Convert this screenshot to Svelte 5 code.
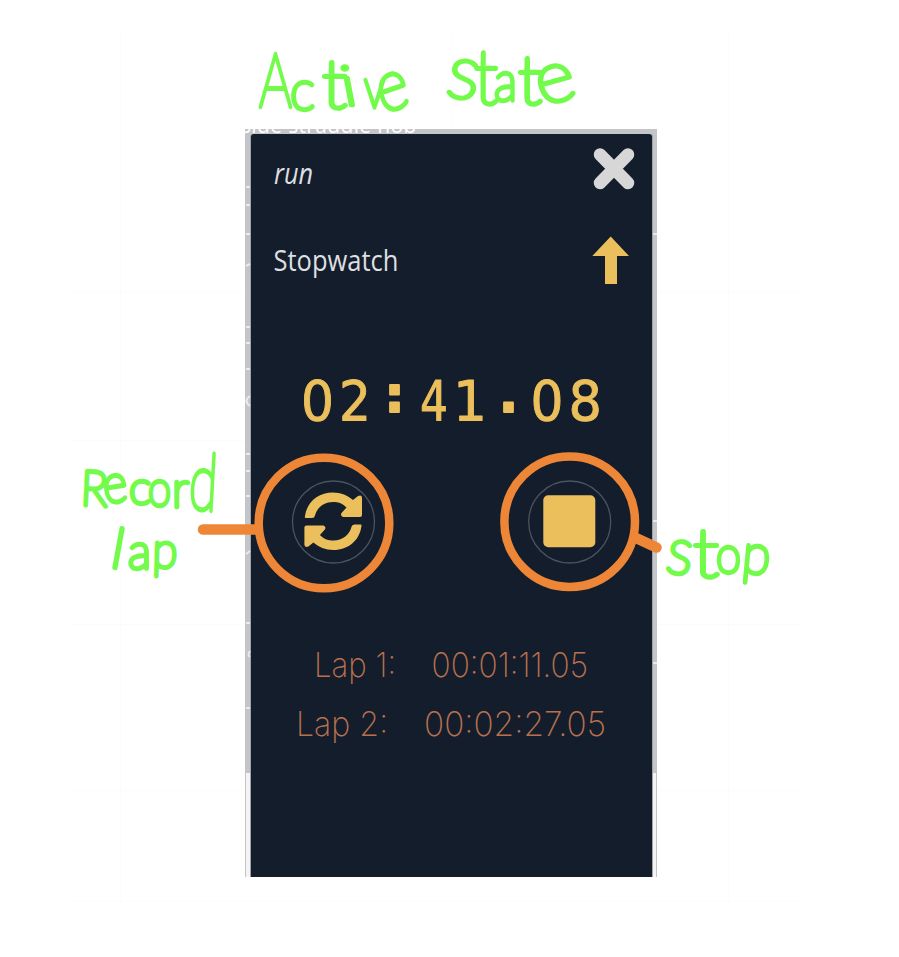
<script>
  // each glyph: character, left, baseline, drawn width, font size, rotation
  const notes = [
    [['A', 259, 107, 33, 77, 0], ['c', 290, 110, 25, 56, 0], ['t', 322, 108, 25, 68, 0], ['i', 345, 106, 14, 56, -9], ['v', 364, 108, 21, 56, 0], ['e', 382, 114, 31, 72, -16]],
    [['S', 445, 96, 31, 53, 8], ['t', 474, 104, 24, 76, 0], ['a', 494, 101, 23, 56, 0], ['t', 518, 104, 24, 68, 0], ['e', 542, 106, 39, 72, -16]],
    [['R', 80, 505, 27, 49, 3], ['e', 105, 504, 24, 54, -8], ['c', 129, 504, 22, 46, 0], ['o', 148, 506, 23, 50, 0], ['r', 172, 507, 17, 50, 0], ['d', 188, 508, 28, 80, 5]],
    [['l', 109, 567, 12, 56, 10], ['a', 128, 569, 23, 50, 0], ['p', 152, 567, 25, 50, 2]],
    [['S', 665, 572, 25, 46, 8], ['t', 693, 577, 26, 69, 0], ['o', 716, 573, 25, 52, 0], ['p', 741, 572, 28, 56, 6]]
  ];
  const clock = [['0', 301, 33], ['2', 339, 32], ['4', 420, 28], ['1', 453, 34], ['0', 530.5, 33], ['8', 568.5, 33.5]];
  const leftTicks = [186, 204, 233, 326, 342, 368, 453, 470, 495, 622, 707];
  const laps = [
    { name: 'Lap 1:', time: '00:01:11.05', x: 314, w: 82, tx: 431.5, tw: 156.5, y: 676.5 },
    { name: 'Lap 2:', time: '00:02:27.05', x: 296, w: 92, tx: 424, tw: 182, y: 736 }
  ];
  const half = 'M305.500 518Q304.500 518 305 516C307 502 318 492.500 333 492.500C341 492.500 348 495.500 353 500L358 496Q362 494.500 362 498V515Q362 517 360 517H343Q340 516 341.500 513L346.500 507.500C342 503 338 502 333 502C324 502 317 507.500 315 515.500Q314.500 518 312 518Z';
</script>

<main>
  <section class="frame">
    <div class="behind">side straddle hob</div>
    <div class="phone"></div>
  </section>

  <svg class="board" width="899" height="957" viewBox="0 0 899 957">
    <g stroke="#fcfcfc" fill="none">
      <path d="M70 292.5H245M657 292.5H800M70 440.5H245M70 624.5H245M657 624.5H800M70 790.5H245M657 790.5H800M70 901.5H800M120.5 30V900M728.5 30V900M452.5 30V128" />
    </g>
    <g fill="#e9eaeb">
      {#each leftTicks as y}<rect x="246" {y} width="4" height="2" />{/each}
      <rect x="653" y="233" width="4" height="2" /><rect x="653" y="520" width="4" height="2" /><rect x="653" y="662" width="4" height="2" />
      <path d="M250 396q-7 5 0 10M246 554l4-3M250 651q-3 4 0 6M246 266l4-2" fill="none" stroke="#e9eaeb" stroke-width="2" />
    </g>

    <g class="head">
      <text x="274" y="184" font-size="29" font-style="italic" textLength="39" lengthAdjust="spacingAndGlyphs">run</text>
      <text x="273.500" y="270.500" font-size="29" textLength="125" lengthAdjust="spacingAndGlyphs">Stopwatch</text>
    </g>
    <path d="M600 154.500L628 183M628 154.500L600 183" stroke="#d7d7d7" stroke-width="12.500" stroke-linecap="round" />
    <path d="M610.700 236.500L629 256H617V284H605V256H592.300Z" fill="#ebbf5b" />

    <text class="clock" y="419.500"><tspan x={clock[0][1]} textLength={clock[0][2]} lengthAdjust="spacingAndGlyphs">0</tspan><tspan x={clock[1][1]} textLength={clock[1][2]} lengthAdjust="spacingAndGlyphs">2</tspan><tspan class="dots" x="384.500" y="411.500">:</tspan><tspan x={clock[2][1]} y="419.500" textLength={clock[2][2]} lengthAdjust="spacingAndGlyphs">4</tspan><tspan x={clock[3][1]} textLength={clock[3][2]} lengthAdjust="spacingAndGlyphs">1</tspan><tspan class="dots" x="499" y="411.500">.</tspan><tspan x={clock[4][1]} y="419.500" textLength={clock[4][2]} lengthAdjust="spacingAndGlyphs">0</tspan><tspan x={clock[5][1]} textLength={clock[5][2]} lengthAdjust="spacingAndGlyphs">8</tspan></text>

    <g fill="none" stroke="#4b5260" stroke-width="1.300">
      <circle cx="333.500" cy="522" r="41" />
      <circle cx="569.700" cy="522" r="41" />
    </g>
    <g fill="#ebbf5b">
      <path d={half} />
      <path d={half} transform="rotate(180 333.200 521.300)" />
      <rect x="543.300" y="495.300" width="52" height="52" rx="5" />
    </g>

    <g fill="none" stroke="#ee8638">
      <circle cx="324" cy="523" r="65.300" stroke-width="8.500" />
      <circle cx="569.700" cy="521.700" r="65.300" stroke-width="8.500" />
      <path d="M203 529.500H257M636 538L656.500 547.500" stroke-width="10.500" stroke-linecap="round" />
    </g>

    <g class="laps">
      {#each laps as l}
        <text x={l.x} y={l.y} textLength={l.w} lengthAdjust="spacingAndGlyphs">{l.name}</text>
        <text x={l.tx} y={l.y} textLength={l.tw} lengthAdjust="spacingAndGlyphs">{l.time}</text>
      {/each}
    </g>

    <g class="notes">
      {#each notes as word}
        <text>{#each word as [ch, x, y, w, size, turn]}<tspan {x} {y} font-size={size} rotate={turn} textLength={w} lengthAdjust="spacingAndGlyphs">{ch}</tspan>{/each}</text>
      {/each}
    </g>
  </svg>
</main>

<style>
  :global(body) { background: #fff; }
  main {
    position: relative;
    width: 899px;
    height: 957px;
    box-sizing: border-box;
    padding: 129px 0 0 245px;
    overflow: hidden;
  }
  .frame {
    position: relative;
    width: 412px;
    height: 748px;
    box-sizing: border-box;
    padding: 5px 5px 0 6px;
    background: linear-gradient(#c4c5c8 644px, #f5f3f3 644px);
    box-shadow: inset 1px 0 #c4c4c4, inset -1px 0 #c4c4c4;
    overflow: hidden;
  }
  .phone {
    height: 743px;
    background: #141d2b;
    border-radius: 3px 3px 0 0;
    box-shadow: -1px 0 #a0a3a8, 1px 0 #a0a3a8;
    position: relative;
  }
  .behind {
    position: absolute;
    left: -4px;
    top: -17px;
    font: 21px/26px "Open Sans", sans-serif;
    letter-spacing: .35px;
    white-space: nowrap;
    color: #fff;
  }
  .board { position: absolute; left: 0; top: 0; }
  .head { font-family: "Open Sans", sans-serif; fill: #dedfe1; }
  .clock {
    font: 56px "DejaVu Sans", sans-serif;
    fill: #ebbf5b;
    stroke: #ebbf5b;
    stroke-width: 1;
    stroke-linejoin: round;
  }
  .dots { font: bold 50px "DejaVu Sans", sans-serif; stroke-width: 2; }
  .laps { font: 200 34px Inter, sans-serif; fill: #b8714e; }
  .notes {
    font-family: Lato, sans-serif;
    font-weight: 100;
    fill: #73fb4b;
    stroke: #73fb4b;
    stroke-width: 4.4;
    stroke-linejoin: round;
  }
</style>
